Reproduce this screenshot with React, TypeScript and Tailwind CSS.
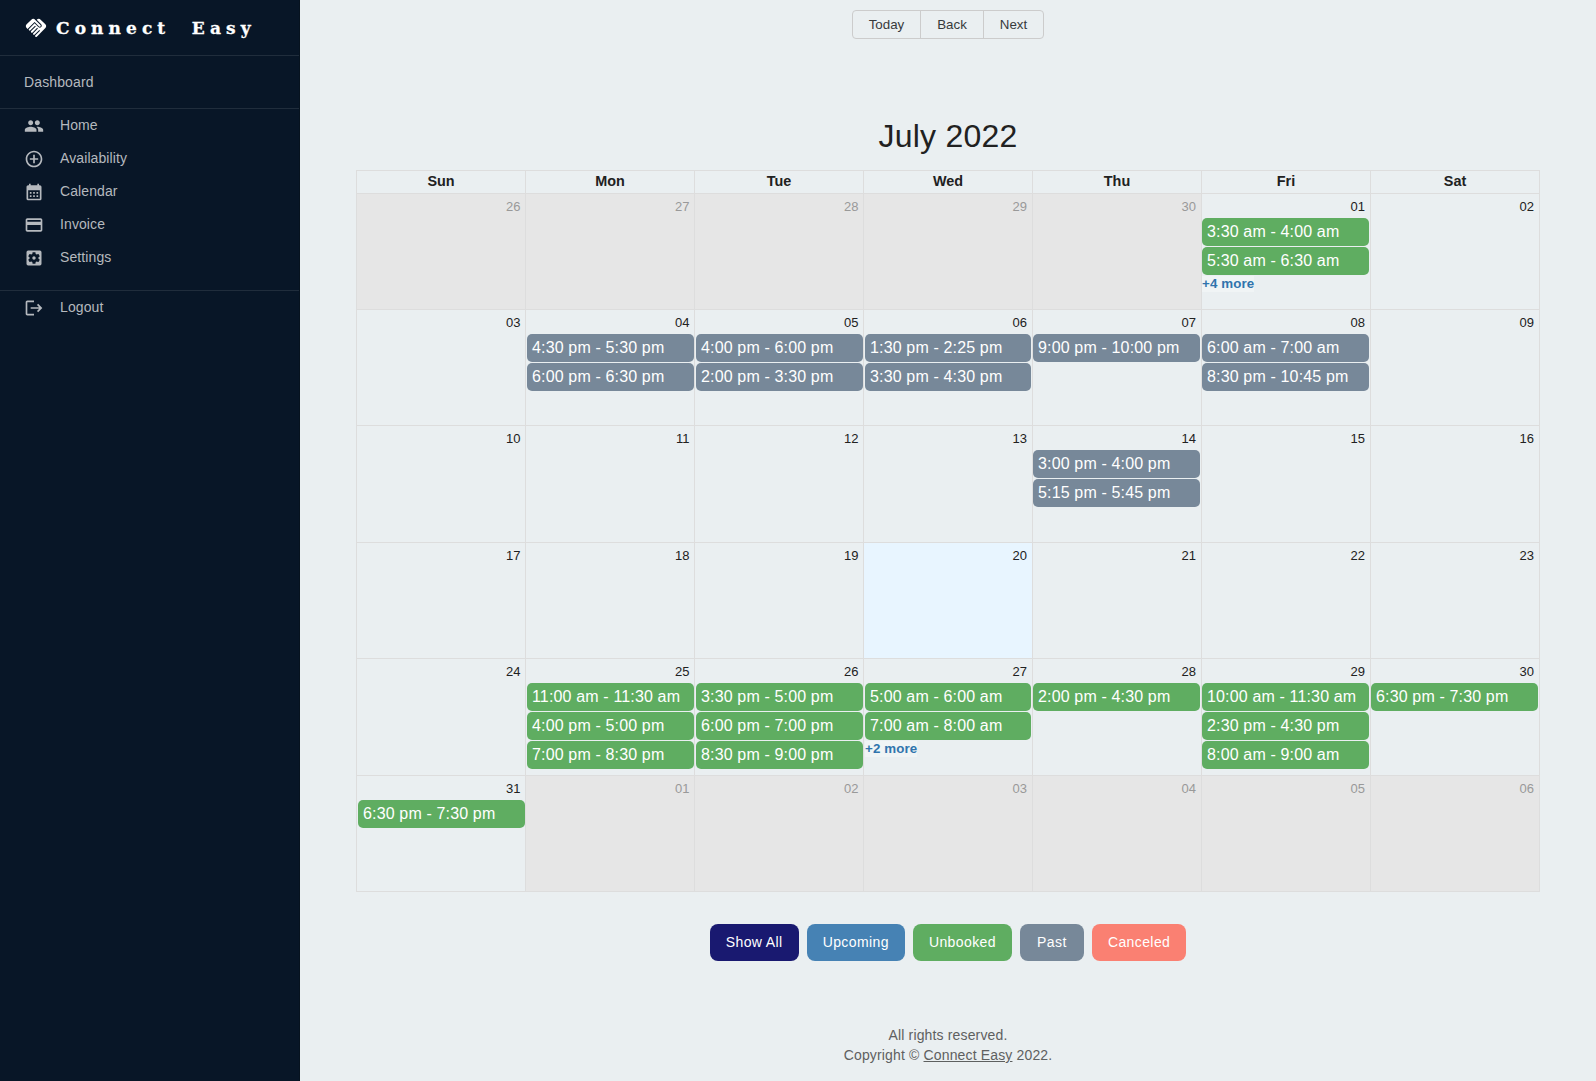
import React from "react";
import {
  MdPeople,
  MdControlPoint,
  MdCalendarMonth,
  MdPayment,
  MdSettingsApplications,
  MdLogout,
  MdHandshake,
} from "react-icons/md";
import type { IconType } from "react-icons";

type Status = "unbooked" | "past";
type Day = {
  date: string;
  off?: boolean;
  today?: boolean;
  status?: Status;
  events?: string[];
  more?: string;
};

const weekdays = ["Sun", "Mon", "Tue", "Wed", "Thu", "Fri", "Sat"];

const weeks: Day[][] = [
  [
    { date: "26", off: true },
    { date: "27", off: true },
    { date: "28", off: true },
    { date: "29", off: true },
    { date: "30", off: true },
    { date: "01", status: "unbooked", events: ["3:30 am - 4:00 am", "5:30 am - 6:30 am"], more: "+4 more" },
    { date: "02" },
  ],
  [
    { date: "03" },
    { date: "04", status: "past", events: ["4:30 pm - 5:30 pm", "6:00 pm - 6:30 pm"] },
    { date: "05", status: "past", events: ["4:00 pm - 6:00 pm", "2:00 pm - 3:30 pm"] },
    { date: "06", status: "past", events: ["1:30 pm - 2:25 pm", "3:30 pm - 4:30 pm"] },
    { date: "07", status: "past", events: ["9:00 pm - 10:00 pm"] },
    { date: "08", status: "past", events: ["6:00 am - 7:00 am", "8:30 pm - 10:45 pm"] },
    { date: "09" },
  ],
  [
    { date: "10" },
    { date: "11" },
    { date: "12" },
    { date: "13" },
    { date: "14", status: "past", events: ["3:00 pm - 4:00 pm", "5:15 pm - 5:45 pm"] },
    { date: "15" },
    { date: "16" },
  ],
  [
    { date: "17" },
    { date: "18" },
    { date: "19" },
    { date: "20", today: true },
    { date: "21" },
    { date: "22" },
    { date: "23" },
  ],
  [
    { date: "24" },
    { date: "25", status: "unbooked", events: ["11:00 am - 11:30 am", "4:00 pm - 5:00 pm", "7:00 pm - 8:30 pm"] },
    { date: "26", status: "unbooked", events: ["3:30 pm - 5:00 pm", "6:00 pm - 7:00 pm", "8:30 pm - 9:00 pm"] },
    { date: "27", status: "unbooked", events: ["5:00 am - 6:00 am", "7:00 am - 8:00 am"], more: "+2 more" },
    { date: "28", status: "unbooked", events: ["2:00 pm - 4:30 pm"] },
    { date: "29", status: "unbooked", events: ["10:00 am - 11:30 am", "2:30 pm - 4:30 pm", "8:00 am - 9:00 am"] },
    { date: "30", status: "unbooked", events: ["6:30 pm - 7:30 pm"] },
  ],
  [
    { date: "31", status: "unbooked", events: ["6:30 pm - 7:30 pm"] },
    { date: "01", off: true },
    { date: "02", off: true },
    { date: "03", off: true },
    { date: "04", off: true },
    { date: "05", off: true },
    { date: "06", off: true },
  ],
];

const statusColor: Record<Status, string> = {
  unbooked: "bg-[#5fad61]",
  past: "bg-[#778899]",
};

const navItems: { label: string; icon: IconType }[] = [
  { label: "Home", icon: MdPeople },
  { label: "Availability", icon: MdControlPoint },
  { label: "Calendar", icon: MdCalendarMonth },
  { label: "Invoice", icon: MdPayment },
  { label: "Settings", icon: MdSettingsApplications },
];

const filters = [
  { label: "Show All", color: "bg-[#191970]" },
  { label: "Upcoming", color: "bg-[#4682b4]" },
  { label: "Unbooked", color: "bg-[#5fad61]" },
  { label: "Past", color: "bg-[#778899]" },
  { label: "Canceled", color: "bg-[#fa8072]" },
];

function NavItem({ label, icon: Icon }: { label: string; icon: IconType }) {
  return (
    <a className="flex h-[33px] items-center pb-[2px] pl-6 text-sm leading-5 tracking-[0.1px] text-[#b5b9be]">
      <Icon className="mt-[2px] size-5" />
      <span className="ml-4">{label}</span>
    </a>
  );
}

function Sidebar() {
  return (
    <aside className="w-[300px] shrink-0 border-r border-[#07131f] bg-[#081627]">
      <div className="flex h-14 items-center border-b border-[#202d3c] pl-6 text-white">
        <MdHandshake className="size-6" />
        <span className="mt-px ml-2 font-['DejaVu_Serif',serif] text-[17px] leading-6 font-bold tracking-[5.1px] whitespace-nowrap [word-spacing:10.5px] [-webkit-text-stroke:0.3px_white]">
          Connect Easy
        </span>
      </div>
      <div className="flex h-[53px] items-center border-b border-[#202d3c] pl-6 text-sm tracking-[0.13px] text-[#b5b9be]">
        Dashboard
      </div>
      <nav className="flex h-[182px] flex-col border-b border-[#202d3c]">
        {navItems.map((item) => (
          <NavItem key={item.label} {...item} />
        ))}
      </nav>
      <NavItem label="Logout" icon={MdLogout} />
    </aside>
  );
}

function DayCell({ day, column }: { day: Day; column: number }) {
  const background = day.off ? "bg-[#e6e6e6]" : day.today ? "bg-[#e8f5ff]" : "";
  return (
    <div
      className={`min-w-0 ${column > 0 ? "border-l border-[#dddddd]" : ""} ${column < 4 ? "pl-px" : ""} ${column > 2 ? "pr-px" : ""} ${background}`}
    >
      <div
        className={`h-6 pt-[3px] text-right text-[13px] leading-[19px] ${column > 2 ? "pr-1" : "pr-[4.5px]"} ${day.off ? "text-[#999999]" : "text-[#212121]"}`}
      >
        {day.date}
      </div>
      {day.events?.map((event) => (
        <div
          key={event}
          className={`mb-px h-7 truncate rounded-[5px] px-[5px] py-0.5 text-base leading-6 tracking-[0.15px] text-white ${statusColor[day.status ?? "unbooked"]}`}
        >
          {event}
        </div>
      ))}
      {day.more && (
        <button className="block bg-white/30 text-[13.33px] leading-4 font-bold tracking-[0.1px] text-[#3174ad]">
          {day.more}
        </button>
      )}
    </div>
  );
}

function Calendar() {
  return (
    <section className="grid h-[722px] w-[1184px] grid-rows-[23px_115px_116px_117px_116px_117px_116px] border border-[#dddddd]">
      <div className="grid grid-cols-[168px_repeat(6,169px)] border-b border-[#dddddd]">
        {weekdays.map((name, i) => (
          <div
            key={name}
            className={`text-center text-[14.4px] leading-[20px] font-bold ${i > 0 ? "border-l border-[#dddddd]" : ""}`}
          >
            {name}
          </div>
        ))}
      </div>
      {weeks.map((week, w) => (
        <div
          key={w}
          className={`grid min-h-0 grid-cols-[168px_repeat(6,169px)] ${w > 0 ? "border-t border-[#dddddd]" : ""}`}
        >
          {week.map((day, d) => (
            <DayCell key={d} day={day} column={d} />
          ))}
        </div>
      ))}
    </section>
  );
}

export default function App() {
  return (
    <div className="flex h-[1081px] w-[1596px] overflow-hidden bg-[#eaeff1] font-['Liberation_Sans',Arial,sans-serif] text-[#212121]">
      <Sidebar />
      <main className="flex min-w-0 flex-1 flex-col items-center">
        <div className="mt-[10px] flex h-[29px] divide-x divide-[#cccccc] rounded-[4px] border border-[#cccccc] text-[13.33px] text-[#373a3c]">
          <button className="w-[68px]">Today</button>
          <button className="w-[63px]">Back</button>
          <button className="w-[59px]">Next</button>
        </div>
        <h1 className="mt-[77px] mb-[14px] text-[32px] leading-10 tracking-[0.25px]">July 2022</h1>
        <Calendar />
        <div className="mt-8 flex gap-2">
          {filters.map((f) => (
            <button
              key={f.label}
              className={`h-[37px] min-w-16 rounded-lg px-4 pb-px text-sm tracking-[0.4px] text-white ${f.color}`}
            >
              {f.label}
            </button>
          ))}
        </div>
        <footer className="mt-16 text-center text-sm leading-5 tracking-[0.15px] text-[#5e6060]">
          <p>All rights reserved.</p>
          <p>
            Copyright © <a className="underline">Connect Easy</a> 2022.
          </p>
        </footer>
      </main>
    </div>
  );
}
